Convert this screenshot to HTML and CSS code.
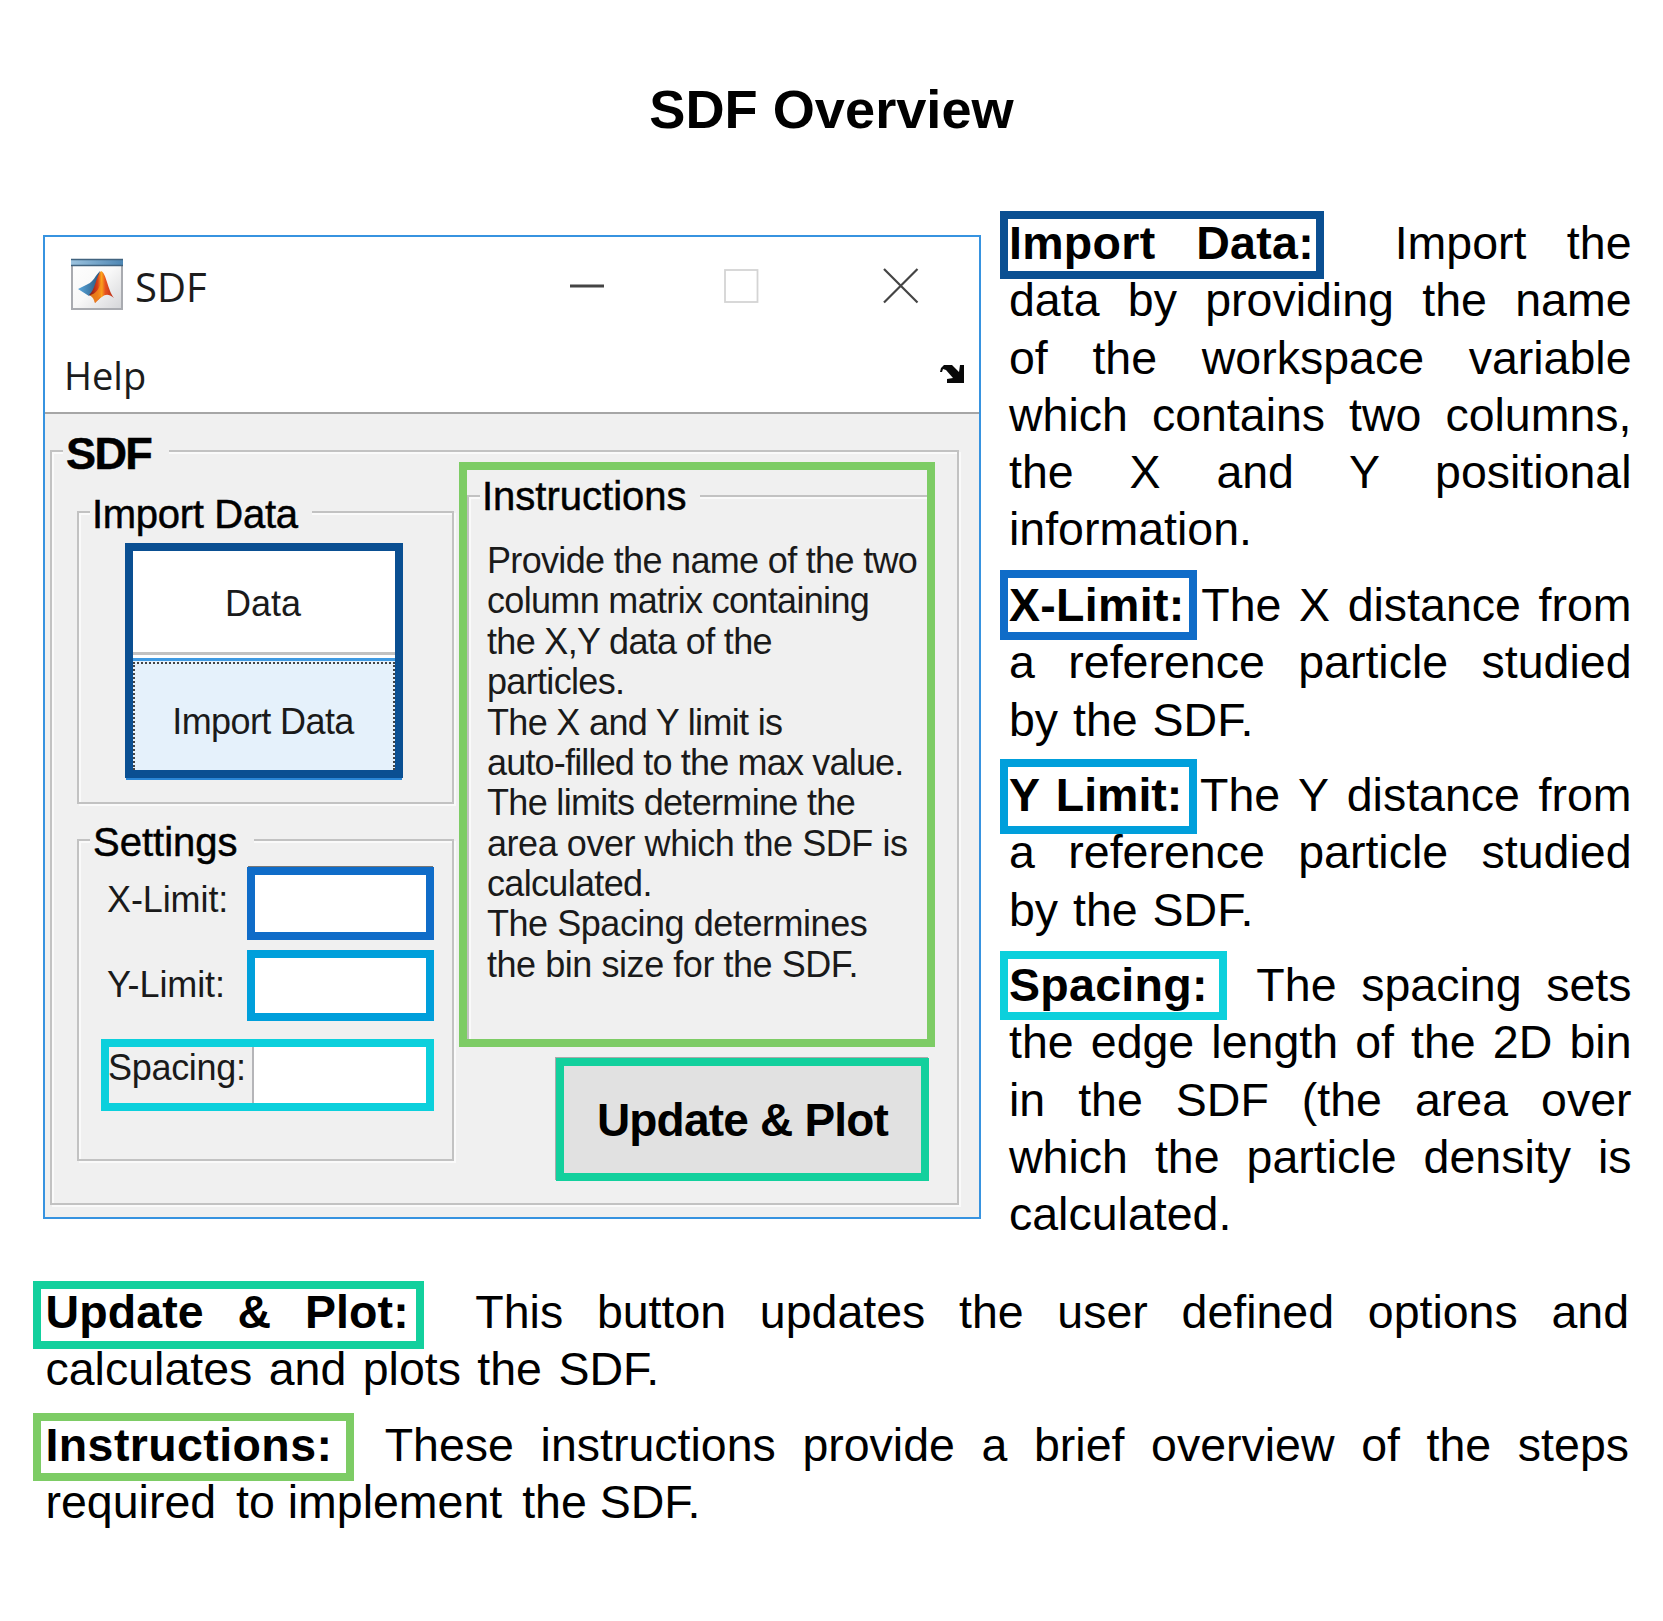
FILE: index.html
```html
<!DOCTYPE html>
<html lang="en">
<head>
<meta charset="utf-8">
<title>SDF Overview</title>
<link rel="stylesheet" href="styles.css">
</head>
<body>
<h1 class="title">SDF Overview</h1>
<main class="overview">
  <section class="window">
    <header class="titlebar">
      <svg class="app-icon" width="54" height="53" viewBox="0 0 54 53">
        <defs>
          <linearGradient id="face" x1="0" y1="0" x2="1" y2="1"><stop offset="0" stop-color="#fff"/><stop offset=".5" stop-color="#f8f8f8"/><stop offset="1" stop-color="#d4d5d8"/></linearGradient>
          <linearGradient id="bar" x1="0" y1="0" x2="1" y2="0"><stop offset="0" stop-color="#9cc3df"/><stop offset="1" stop-color="#4d86b3"/></linearGradient>
          <linearGradient id="flame" x1="0" y1="0" x2="1" y2="0"><stop offset="0" stop-color="#7c1410"/><stop offset=".35" stop-color="#d8401b"/><stop offset=".5" stop-color="#fba51c"/><stop offset=".65" stop-color="#e8531f"/><stop offset="1" stop-color="#b52a17"/></linearGradient>
          <linearGradient id="wing" x1="0" y1="0" x2="1" y2="0"><stop offset="0" stop-color="#5aa7dc"/><stop offset="1" stop-color="#27567f"/></linearGradient>
        </defs>
        <rect x="2" y="2" width="50" height="49" fill="url(#face)" stroke="#a9abb0" stroke-width="2"/>
        <rect x="1" y="1" width="52" height="7" fill="url(#bar)"/>
        <path d="M1 1.500H53M1 7.500H53" stroke="#41637f" stroke-width="1.300"/>
        <path d="M8 31L18 26C22 25 26 17 30 13L27 30L19 38Z" fill="url(#wing)"/>
        <path d="M19 37C25 33 26 18 31 13C36 14 38 33 44 40C36 34 34 37 25 45C24 40 22 38 19 37Z" fill="url(#flame)"/>
        <path d="M25 45C23 39 21 38 20 37C25 36 29 32 32 22C34 31 31 40 25 45Z" fill="#f7941d" opacity=".75"/>
      </svg>
      <span class="caption">SDF</span>
      <svg class="controls" width="350" height="36" viewBox="0 0 350 36" fill="none">
        <path d="M1 18H35" stroke="#444" stroke-width="2.800"/>
        <rect x="156" y="2" width="32.500" height="32" stroke="#d4d4d4" stroke-width="1.800"/>
        <path d="M315 1L348.500 34.500M348.500 1L315 34.500" stroke="#444" stroke-width="2.200"/>
      </svg>
    </header>
    <nav class="menubar">
      <span>Help</span>
      <svg class="dock" width="26" height="20" viewBox="0 0 26 20"><path d="M1 8L2 4L5 1H13L20 8L21 1H25V19H8V15L14 14L7 6L4 5L3 8Z" fill="#080808"/></svg>
    </nav>
    <div class="group main-group">
      <span class="legend legend-main">SDF</span>
      <div class="left">
        <div class="group import-group">
          <span class="legend">Import Data</span>
          <div class="import-frame">
            <div class="data-field">Data</div>
            <div class="import-button">Import Data</div>
          </div>
        </div>
        <div class="group settings-group">
          <span class="legend legend-settings">Settings</span>
          <div class="row row-x"><span class="name">X-Limit:</span><div class="field"></div></div>
          <div class="row row-y"><span class="name">Y-Limit:</span><div class="field"></div></div>
          <div class="row-spacing"><span class="spacing-name">Spacing:</span><div class="spacing-field"></div></div>
        </div>
      </div>
      <div class="right">
        <div class="instructions">
          <div class="instructions-body">
            <span class="legend legend-instructions">Instructions</span>
            <p>Provide the name of the two<br>column matrix containing<br>the X,Y data of the<br>particles.<br>The X and Y limit is<br><span class="tight">auto-filled to the max value.</span><br>The limits determine the<br><span class="open">area over which the SDF is</span><br>calculated.<br><span class="open">The Spacing determines</span><br><span class="open">the bin size for the SDF.</span></p>
          </div>
        </div>
        <div class="update-button">Update &amp; Plot</div>
      </div>
    </div>
  </section>
  <section class="notes">
    <p>
      <span class="line"><b class="tag tag-import">Import Data:</b>&nbsp; Import the</span>
      <span class="line">data by providing the name</span>
      <span class="line">of the workspace variable</span>
      <span class="line">which contains two columns,</span>
      <span class="line">the X and Y positional</span>
      <span class="line last">information.</span>
    </p>
    <p>
      <span class="line"><b class="tag tag-x">X-Limit:</b> The X distance from</span>
      <span class="line">a reference particle studied</span>
      <span class="line last sdf">by the SDF.</span>
    </p>
    <p>
      <span class="line"><b class="tag tag-y">Y Limit:</b> The Y distance from</span>
      <span class="line">a reference particle studied</span>
      <span class="line last sdf">by the SDF.</span>
    </p>
    <p>
      <span class="line"><b class="tag tag-spacing">Spacing:</b>&nbsp; The spacing sets</span>
      <span class="line">the edge length of the 2D bin</span>
      <span class="line">in the SDF (the area over</span>
      <span class="line">which the particle density is</span>
      <span class="line last">calculated.</span>
    </p>
  </section>
</main>
<section class="notes wide">
  <p>
    <span class="line"><b class="tag tag-update">Update &amp; Plot:</b>&nbsp; This button updates the user defined options and</span>
    <span class="line last loose">calculates and plots the SDF.</span>
  </p>
  <p>
    <span class="line"><b class="tag tag-instructions">Instructions:</b>&nbsp; These instructions provide a brief overview of the steps</span>
    <span class="line last">required<span class="gap"> </span>to implement<span class="gap"> </span>the SDF.</span>
  </p>
</section>
</body>
</html>
```

FILE: styles.css
```css
*, *::after { box-sizing: border-box; }
body {
  margin: 0;
  width: 1663px;
  height: 1621px;
  background: #fff;
  color: #000;
  font-family: "Liberation Sans", Arial, sans-serif;
  overflow: hidden;
}
p { margin: 0; }
.title {
  margin: 0;
  padding-top: 78px;
  height: 214px;
  font-size: 54.2px;
  line-height: 62px;
  text-align: center;
}
.overview {
  display: flex;
  height: 1070px;
  padding-left: 43px;
}

/* application window */
.window {
  width: 938px;
  height: 984px;
  margin-top: 21px;
  flex: none;
  border: 2px solid #3793e0;
  background: #f0f0f0;
  color: #1a1a1a;
  font-size: 36px;
  line-height: 40.2px;
}
.titlebar, .menubar {
  display: flex;
  background: #fff;
  color: #1c1c1c;
  font-family: "Open Sans", "Noto Sans", sans-serif;
}
.titlebar {
  height: 92px;
  padding: 21px 0 0 25px;
}
.caption {
  width: 76px;
  margin-left: 11px;
  font-size: 40px;
  line-height: 57px;
}
.controls { margin: 10px 0 0 358px; }
.menubar {
  height: 85px;
  padding: 18px 14px 0 19px;
  justify-content: space-between;
  border-bottom: 2px solid #a6a6a6;
  font-size: 38px;
  line-height: 56px;
}
.dock { margin-top: 17px; }

.group {
  position: relative;
  border: 2px solid #c2c2c2;
  box-shadow: 2px 2px 0 #fafafa, inset 2px 2px 0 #fafafa;
}
.legend {
  position: absolute;
  left: 11px;
  top: -21px;
  width: 222px;
  padding-left: 2px;
  background: #f0f0f0;
  color: #000;
  font-size: 40px;
  line-height: 44px;
  letter-spacing: -0.3px;
  white-space: nowrap;
  -webkit-text-stroke: 0.5px #000;
}
.main-group {
  width: 909px;
  height: 755px;
  margin: 36px 0 0 5px;
  padding-left: 25px;
  display: flex;
  gap: 5px;
}
.legend-main {
  top: -23px;
  width: 106px;
  padding-left: 3px;
  font-size: 45px;
  line-height: 50px;
  font-weight: bold;
  letter-spacing: -1.6px;
}
.left {
  width: 377px;
  padding-top: 59px;
  display: flex;
  flex-direction: column;
  gap: 35px;
}
.import-group { height: 293px; padding: 30px 0 0 46px; }
.import-frame {
  width: 278px;
  height: 235px;
  border: 8px solid #0a4f92;
  box-shadow: 0 3px 0 -1px #2a86d6;
  background: #fff;
  text-align: center;
}
.data-field {
  height: 104px;
  padding: 33px 2px 0 0;
  border-bottom: 3px solid #c2c2c2;
}
.import-button {
  height: 112px;
  margin-top: 3px;
  padding: 41px 2px 0 0;
  border-top: 3px solid #3f9ae2;
  background: #e5f1fb;
  letter-spacing: -0.6px;
  position: relative;
}
.import-button::after {
  content: "";
  position: absolute;
  inset: 1px 0 0 0;
  border: 2px dotted #444;
  border-bottom: 0;
}
.settings-group {
  height: 322px;
  padding-top: 26px;
}
.legend-settings { width: 164px; padding-left: 3px; letter-spacing: 0; }
.row { display: flex; padding-left: 28px; }
.name { width: 140px; padding: 13px 0 0 0; letter-spacing: -0.1px; }
.field { width: 187px; height: 73px; border: 8px solid #0f6cc8; background: #fff; }
.row-x .field { box-shadow: 0 -2px 0 -1px #777; }
.row-y { margin-top: 10px; }
.row-y .name { padding-top: 15px; }
.row-y .field { height: 71px; border-color: #009fdb; }
.row-spacing {
  display: flex;
  width: 333px;
  height: 72px;
  margin: 18px 0 0 22px;
  border: 8px solid #0cd0dc;
}
.spacing-name { width: 143px; margin-left: -1px; padding-top: 1px; letter-spacing: -0.3px; }
.spacing-field { flex: 1; margin-left: 1px; border-left: 2px solid #b5b5b8; background: #fff; }

.right {
  width: 476px;
  padding-top: 10px;
  display: flex;
  flex-direction: column;
  position: relative;
}
.instructions {
  height: 585px;
  padding-top: 25px;
  border: 8px solid #7dcc65;
  background: #f0f0f0;
}
.instructions-body {
  position: relative;
  height: 544px;
  padding: 44px 0 0 18px;
  border: solid #c2c2c2;
  border-width: 2px 0 0 2px;
  box-shadow: inset 2px 2px 0 #fafafa;
  line-height: 40.37px;
  letter-spacing: -0.67px;
  white-space: nowrap;
}
.tight { letter-spacing: -0.82px; }
.open { letter-spacing: -0.45px; }
.legend-instructions { top: -23px; width: 220px; letter-spacing: 0; }
.update-button {
  width: 373px;
  height: 123px;
  margin: 11px 6px 0 auto;
  border: 8px solid #12d09d;
  box-shadow: -1px -1px 0 #aaa;
  background: #e1e1e1;
  color: #000;
  font-size: 46px;
  font-weight: bold;
  line-height: 108px;
  letter-spacing: -0.8px;
  text-align: center;
}

/* explanatory text */
.notes {
  width: 622.5px;
  margin: 1px 0 0 28px;
  font-size: 46.5px;
  line-height: 57.3px;
}
.notes p + p { margin-top: 18.2px; }
.wide { width: 1583.5px; margin: 0 0 0 45.5px; }
.line {
  display: block;
  height: 57.3px;
  text-align: justify;
  text-align-last: justify;
  white-space: nowrap;
}
.last { text-align-last: left; }
.sdf { word-spacing: 2px; }
.loose { word-spacing: 3.5px; }
.gap { word-spacing: 7px; }
.tag { position: relative; letter-spacing: 0.3px; }
.tag::after {
  content: "";
  position: absolute;
  left: -9px;
  border: 8px solid;
}
.tag-import::after { top: -6px; width: 324px; height: 68px; border-color: #0a4f92; }
.tag-x::after { top: -9px; width: 197px; height: 70px; border-color: #0f6cc8; }
.tag-y { letter-spacing: 0; word-spacing: -2px; }
.tag-y::after { top: -10px; width: 197px; height: 75px; border-color: #009fdb; }
.tag-spacing::after { top: -8px; width: 227px; height: 69px; border-color: #0cd0dc; }
.tag-update { letter-spacing: 0.1px; }
.tag-update::after { left: -13px; top: -5px; width: 391px; height: 68px; border-color: #12d09d; }
.tag-instructions { letter-spacing: 0.4px; }
.tag-instructions::after { left: -13px; top: -6px; width: 321px; height: 68px; border-color: #7dcc65; }
```
